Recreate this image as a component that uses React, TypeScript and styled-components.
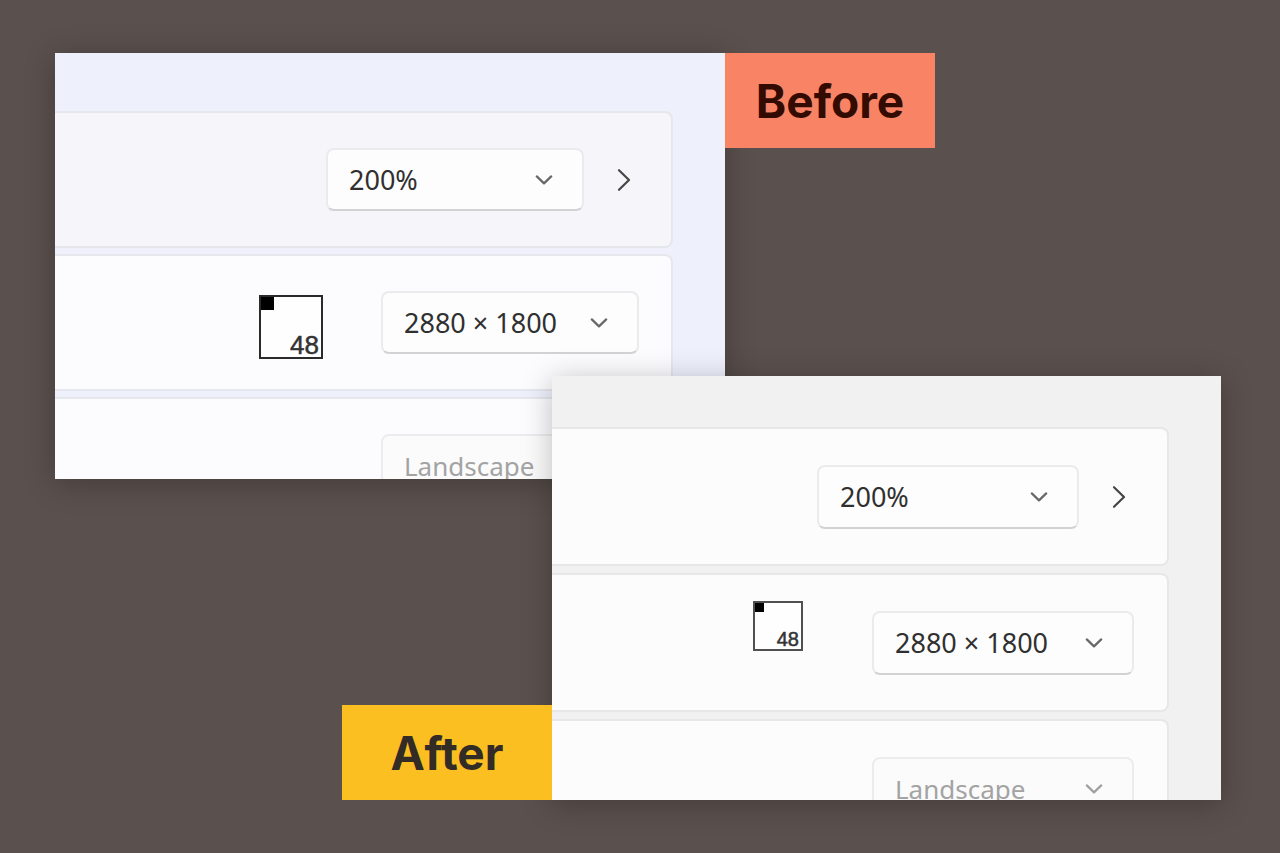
import React from "react";
import styled, { createGlobalStyle, ThemeProvider } from "styled-components";

const GlobalStyle = createGlobalStyle`
  *, *::before, *::after { box-sizing: border-box; }
  body {
    margin: 0;
    background: #5a504d;
    font-family: "Noto Sans", "Open Sans", sans-serif;
  }
`;

interface PanelTheme {
  panel: string;
  firstCard: string;
  card: string;
  line: string;
  panelTop: number;
  cardHeight: number;
  cardGap: number;
  cardRight: number;
  selectWidth: number;
  selectHeight: number;
  markerSize: number;
  markerFont: number;
  markerLine: number;
  markerCorner: number;
  markerTop: number;
  markerGap: number;
  markerInk: string;
}

const beforeTheme: PanelTheme = {
  panel: "#eef1fc",
  firstCard: "#f5f5fa",
  card: "#fcfcfe",
  line: "#e5e7ed",
  panelTop: 58,
  cardHeight: 137,
  cardGap: 6,
  cardRight: 32,
  selectWidth: 258,
  selectHeight: 63,
  markerSize: 64,
  markerFont: 26,
  markerLine: 20,
  markerCorner: 15,
  markerTop: 39,
  markerGap: 58,
  markerInk: "#2a2a2a",
};

const afterTheme: PanelTheme = {
  panel: "#f1f1f1",
  firstCard: "#fcfcfc",
  card: "#fcfcfc",
  line: "#e7e7e7",
  panelTop: 51,
  cardHeight: 139,
  cardGap: 7,
  cardRight: 33,
  selectWidth: 262,
  selectHeight: 64,
  markerSize: 50,
  markerFont: 20,
  markerLine: 16,
  markerCorner: 11,
  markerTop: 26,
  markerGap: 69,
  markerInk: "#505050",
};

const Stage = styled.main`
  display: grid;
  grid-template-columns: 497fr 173fr 496fr;
  grid-template-rows: 323px 103px 321px;
  min-height: 100vh;
  padding: 53px 59px 53px 55px;
`;

const Panel = styled.section<{ $area: string; $layer: number }>`
  grid-area: ${(p) => p.$area};
  z-index: ${(p) => p.$layer};
  display: flex;
  flex-direction: column;
  gap: ${(p) => (p.theme as PanelTheme).cardGap}px;
  min-height: 0;
  overflow: hidden;
  padding: ${(p) => (p.theme as PanelTheme).panelTop}px 52px 0 0;
  background: ${(p) => (p.theme as PanelTheme).panel};
  box-shadow: 0 4px 28px rgba(0, 0, 0, 0.25);
`;

const Card = styled.div<{ $first?: boolean }>`
  display: flex;
  flex: none;
  align-items: center;
  justify-content: flex-end;
  height: ${(p) => (p.theme as PanelTheme).cardHeight}px;
  padding-right: ${(p) => (p.theme as PanelTheme).cardRight}px;
  border: 2px solid ${(p) => (p.theme as PanelTheme).line};
  border-left: 0;
  border-radius: 0 8px 8px 0;
  background: ${(p) =>
    p.$first ? (p.theme as PanelTheme).firstCard : (p.theme as PanelTheme).card};
`;

const SelectBox = styled.span`
  display: grid;
  align-items: center;
  width: ${(p) => (p.theme as PanelTheme).selectWidth}px;
  height: ${(p) => (p.theme as PanelTheme).selectHeight}px;
`;

const Select = styled.select`
  grid-area: 1 / 1;
  appearance: none;
  width: 100%;
  height: 100%;
  padding: 0 60px 0 21px;
  border: 2px solid #ebebed;
  border-bottom-color: #d2d2d3;
  border-radius: 8px;
  background: #fdfdfd;
  color: #303030;
  font-family: inherit;
  font-size: 27px;

  &:disabled {
    border-color: #ececee;
    background: #fbfbfc;
    color: #a3a3a3;
    font-size: 26px;
    opacity: 1;
  }
`;

const Chevron = styled.svg<{ $muted?: boolean }>`
  grid-area: 1 / 1;
  justify-self: end;
  width: 18px;
  height: 10px;
  margin-right: 31px;
  fill: none;
  stroke: ${(p) => (p.$muted ? "#a0a0a0" : "#686868")};
  stroke-width: 2.2;
  stroke-linecap: round;
  stroke-linejoin: round;
  pointer-events: none;
`;

const ArrowButton = styled.button`
  display: flex;
  align-items: center;
  justify-content: center;
  width: 24px;
  height: 40px;
  margin: 0 3px 0 28px;
  padding: 0;
  border: 0;
  background: none;
`;

const Arrow = styled.svg`
  width: 14px;
  height: 24px;
  fill: none;
  stroke: #454545;
  stroke-width: 2.2;
  stroke-linecap: round;
  stroke-linejoin: round;
`;

const Marker = styled.span`
  display: flex;
  align-items: flex-end;
  align-self: flex-start;
  justify-content: flex-end;
  width: ${(p) => (p.theme as PanelTheme).markerSize}px;
  height: ${(p) => (p.theme as PanelTheme).markerSize}px;
  margin: ${(p) => (p.theme as PanelTheme).markerTop}px
    ${(p) => (p.theme as PanelTheme).markerGap}px 0 0;
  padding: 0 2px 2px 0;
  border: 2px solid ${(p) => (p.theme as PanelTheme).markerInk};
  background: linear-gradient(#000000, #000000) 0 0 / ${(p) =>
      (p.theme as PanelTheme).markerCorner}px ${(p) =>
      (p.theme as PanelTheme).markerCorner}px no-repeat border-box #fefefe;
  color: #333333;
  font-family: "Liberation Sans", Arial, sans-serif;
  font-size: ${(p) => (p.theme as PanelTheme).markerFont}px;
  line-height: ${(p) => (p.theme as PanelTheme).markerLine}px;
  -webkit-text-stroke: 0.5px currentColor;
`;

const Tag = styled.h2<{ $area: string; $bottom?: boolean; $fill: string; $ink: string }>`
  grid-area: ${(p) => p.$area};
  place-self: ${(p) => (p.$bottom ? "end end" : "start start")};
  z-index: 1;
  display: flex;
  align-items: center;
  justify-content: center;
  width: 210px;
  height: 95px;
  margin: 0;
  background: ${(p) => p.$fill};
  color: ${(p) => p.$ink};
  font-family: Inter, sans-serif;
  font-size: 46px;
  font-weight: 700;
  line-height: 1;
`;

const Dropdown = ({ label, value, disabled }: { label: string; value: string; disabled?: boolean }) => (
  <SelectBox>
    <Select aria-label={label} disabled={disabled} defaultValue={value}>
      <option>{value}</option>
    </Select>
    <Chevron $muted={disabled} viewBox="0 0 18 10" aria-hidden="true">
      <path d="M1.8 1.4 9 8.4 16.2 1.4" />
    </Chevron>
  </SelectBox>
);

const DisplaySettings = ({ area, layer, theme, name }: {
  area: string;
  layer: number;
  theme: PanelTheme;
  name: string;
}) => (
  <ThemeProvider theme={theme}>
    <Panel $area={area} $layer={layer} aria-label={name}>
      <Card $first>
        <Dropdown label="Scale" value="200%" />
        <ArrowButton type="button" aria-label="Custom scaling">
          <Arrow viewBox="0 0 14 24" aria-hidden="true">
            <path d="M2 2.2 12 12 2 21.8" />
          </Arrow>
        </ArrowButton>
      </Card>
      <Card>
        <Marker>48</Marker>
        <Dropdown label="Display resolution" value="2880 × 1800" />
      </Card>
      <Card>
        <Dropdown label="Display orientation" value="Landscape" disabled />
      </Card>
    </Panel>
  </ThemeProvider>
);

export default function App() {
  return (
    <>
      <GlobalStyle />
      <Stage>
        <DisplaySettings area="1 / 1 / 3 / 3" layer={0} theme={beforeTheme} name="Before" />
        <Tag $area="1 / 3" $fill="#f98365" $ink="#330b00">Before</Tag>
        <DisplaySettings area="2 / 2 / 4 / 4" layer={1} theme={afterTheme} name="After" />
        <Tag $area="3 / 1" $bottom $fill="#fcbf21" $ink="#332b26">After</Tag>
      </Stage>
    </>
  );
}
